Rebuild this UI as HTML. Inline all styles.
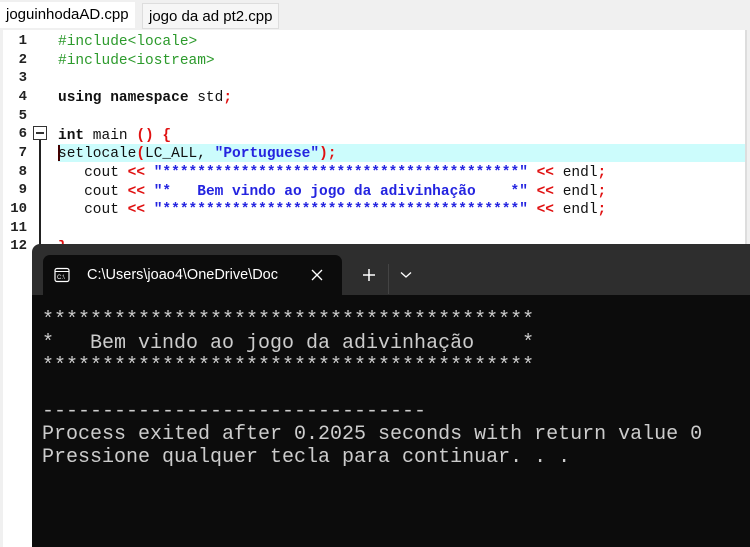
<!DOCTYPE html>
<html><head><style>
body{margin:0;width:750px;height:547px;overflow:hidden;background:#f0f0f0;position:relative;font-family:"Liberation Sans",sans-serif}
.tab{position:absolute;top:2px;height:26px;font-size:15px;line-height:26px;padding:0 6px;color:#000}
#ed{position:absolute;left:3px;top:30px;width:744px;height:517px;background:#fff}
#gut{position:absolute;left:0;top:0;width:50px;height:517px;background:#fff}
.ln{position:absolute;left:0;width:24px;text-align:right;font:bold 14px "Liberation Mono",monospace;color:#222}
.cl{position:absolute;left:55px;font:14.5px/18.7px "Liberation Mono",monospace;white-space:pre;color:#111;top:3px}
.k{font-weight:bold}
.g{color:#2c9a2c}.r{color:#e01010;font-weight:bold}.b{color:#2424e0;font-weight:bold}
#term{position:absolute;left:32px;top:244px;width:718px;height:303px;background:#2e2e2e;border-top-left-radius:8px}
#body{position:absolute;left:0;top:51px;width:718px;height:252px;background:#0c0c0c}
#tt{position:absolute;left:11px;top:11px;width:299px;height:40px;background:#0c0c0c;border-radius:7px 7px 0 0;color:#fff;font-size:14.5px}
pre{margin:0;position:absolute;left:10px;top:15px;font:20px/22.8px "Liberation Mono",monospace;color:#ccc}
</style></head><body>
<div class="tab" style="left:0;background:#fff;">joguinhodaAD.cpp</div>
<div class="tab" style="left:142px;background:#f6f6f6;border:1px solid #ddd;height:24px;top:3px">jogo da ad pt2.cpp</div>
<div id="ed">
<div id="gut"></div>
<div style="position:absolute;left:55px;top:114px;width:689px;height:18px;background:#ccfcfc"></div>
<div style="position:absolute;left:55px;top:115px;width:2px;height:16px;background:#400"></div>
<div style="position:absolute;left:30px;top:96px;width:12px;height:12px;border:1px solid #333;background:#fff"><div style="position:absolute;left:2px;top:5px;width:8px;height:1.5px;background:#333"></div></div>
<div style="position:absolute;left:36px;top:110px;width:1.5px;height:110px;background:#222"></div>
<div style="position:absolute;right:0;top:0;width:2px;height:517px;background:#ddd"></div>
<div class="ln" style="top:3px">1</div><div class="ln" style="top:22px">2</div><div class="ln" style="top:40px">3</div><div class="ln" style="top:59px">4</div><div class="ln" style="top:78px">5</div><div class="ln" style="top:96px">6</div><div class="ln" style="top:115px">7</div><div class="ln" style="top:134px">8</div><div class="ln" style="top:152px">9</div><div class="ln" style="top:171px">10</div><div class="ln" style="top:190px">11</div><div class="ln" style="top:208px">12</div>
<div class="cl"><span class="g">#include&lt;locale&gt;</span>
<span class="g">#include&lt;iostream&gt;</span>

<span class="k">using namespace</span> std<span class="r">;</span>

<span class="k">int</span> main <span class="r">() {</span>
setlocale<span class="r">(</span>LC_ALL, <span class="b">"Portuguese"</span><span class="r">);</span>
   cout <span class="r">&lt;&lt;</span> <span class="b">"*****************************************"</span> <span class="r">&lt;&lt;</span> endl<span class="r">;</span>
   cout <span class="r">&lt;&lt;</span> <span class="b">"*   Bem vindo ao jogo da adivinhação    *"</span> <span class="r">&lt;&lt;</span> endl<span class="r">;</span>
   cout <span class="r">&lt;&lt;</span> <span class="b">"*****************************************"</span> <span class="r">&lt;&lt;</span> endl<span class="r">;</span>

<span class="r">}</span></div>
</div>
<div id="term">
<div id="tt">
<svg style="position:absolute;left:11px;top:12px" width="16" height="16" viewBox="0 0 16 16"><rect x="1" y="1.5" width="14" height="13" rx="2" fill="none" stroke="#fff" stroke-width="1.2"/><line x1="1" y1="4.5" x2="15" y2="4.5" stroke="#fff"/><text x="3" y="12" font-size="6" fill="#fff" font-family="Liberation Sans">C:\</text></svg>
<span style="position:absolute;left:44px;top:12px">C:\Users\joao4\OneDrive\Doc</span>
<svg style="position:absolute;left:268px;top:14px" width="12" height="12"><path d="M1 1L11 11M11 1L1 11" stroke="#fff" stroke-width="1.3"/></svg>
</div>
<svg style="position:absolute;left:330px;top:24px" width="14" height="14"><path d="M7 1V13M1 7H13" stroke="#fff" stroke-width="1.5"/></svg>
<div style="position:absolute;left:356px;top:20px;width:1px;height:30px;background:#444"></div>
<svg style="position:absolute;left:368px;top:27px" width="12" height="8"><path d="M1 1.5L6 6L11 1.5" stroke="#fff" fill="none" stroke-width="1.3"/></svg>
<div id="body"><pre>*****************************************
*   Bem vindo ao jogo da adivinhação    *
*****************************************

--------------------------------
Process exited after 0.2025 seconds with return value 0
Pressione qualquer tecla para continuar. . .</pre></div>
</div>
</body></html>
